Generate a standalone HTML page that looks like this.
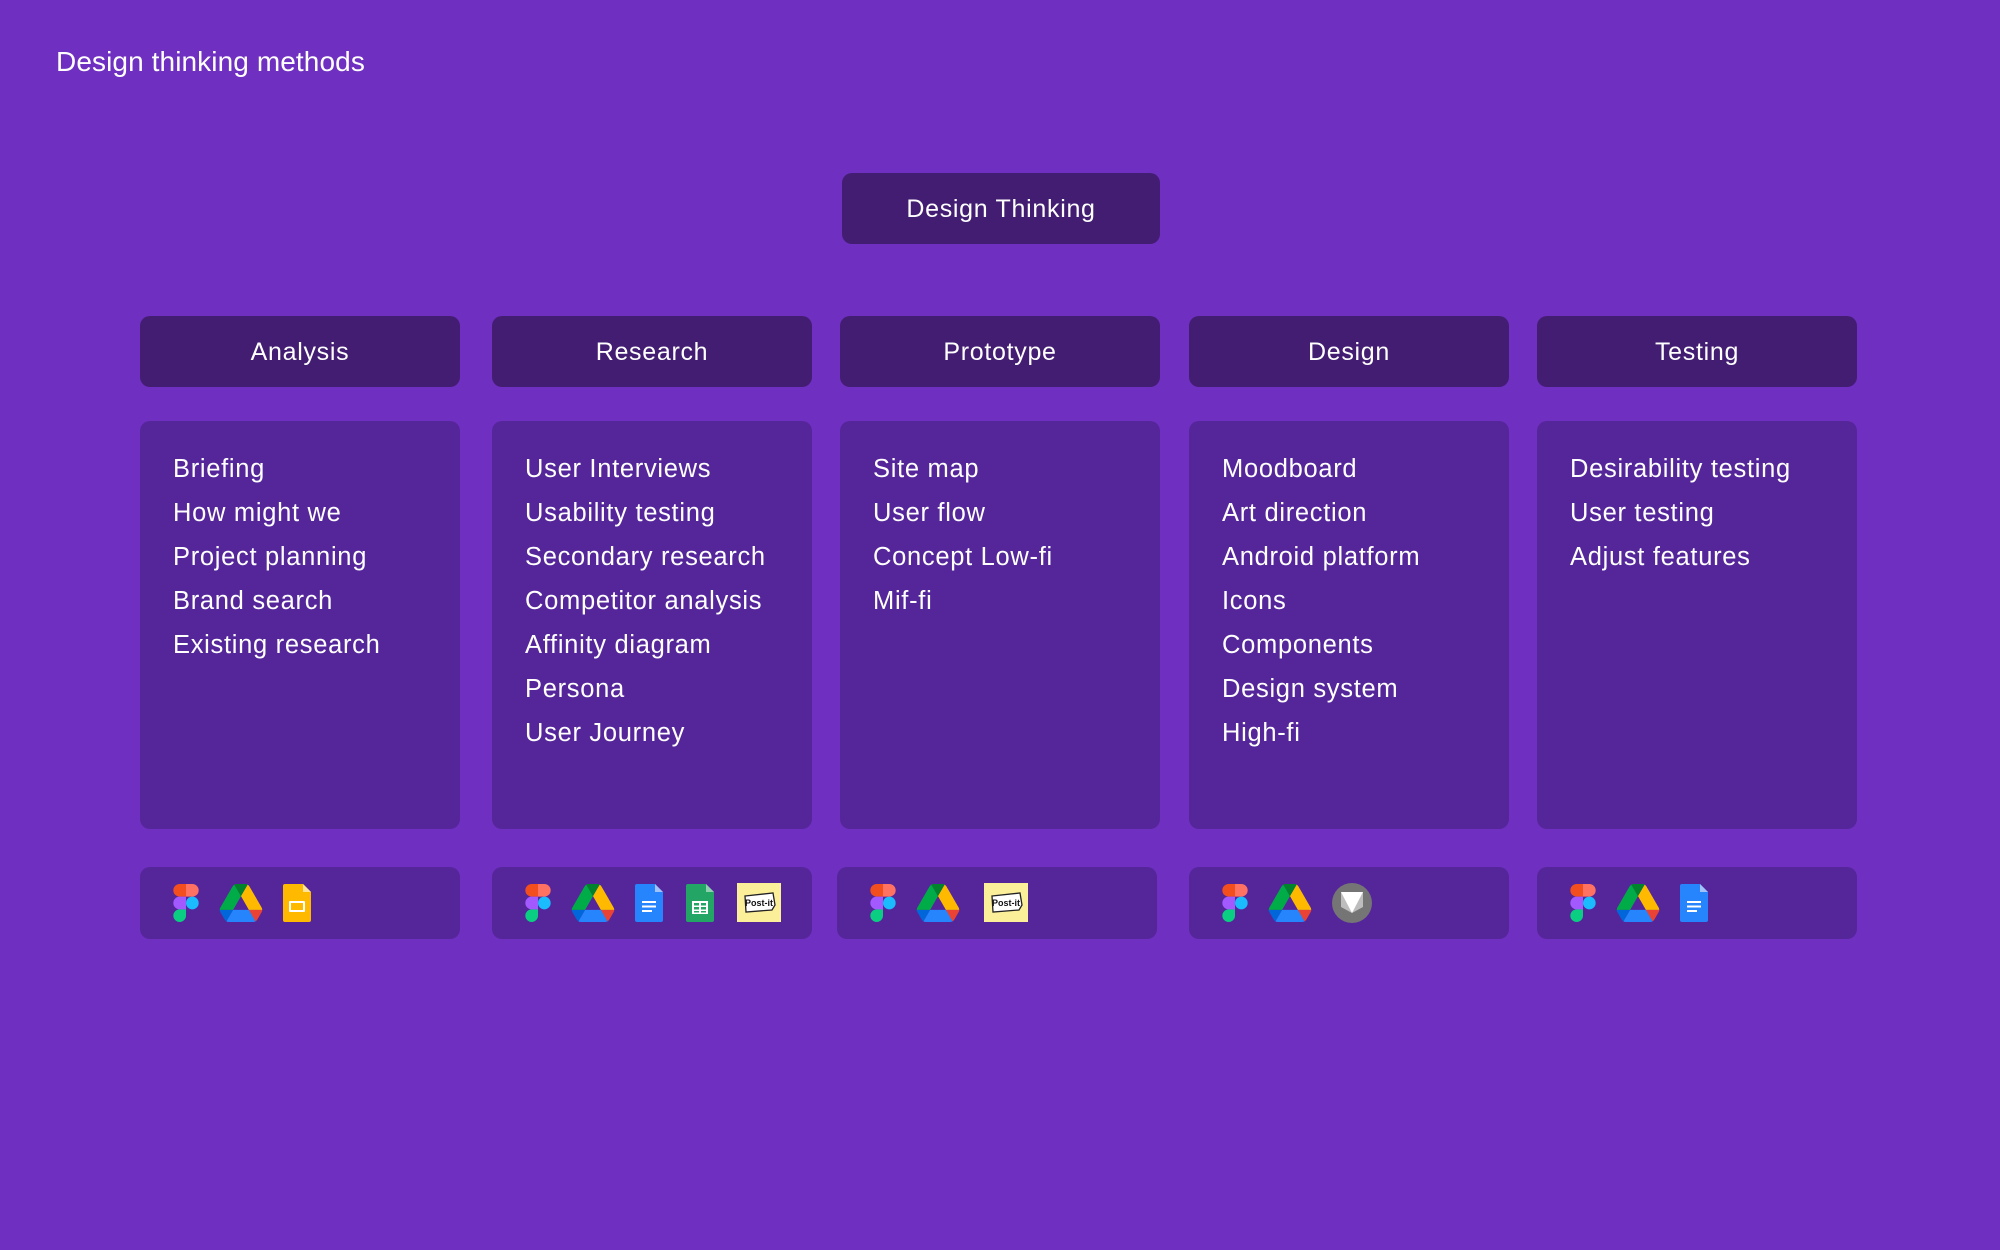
<!DOCTYPE html>
<html><head><meta charset="utf-8"><style>
body{margin:0;width:2000px;height:1250px;background:#6f2fc0;font-family:"Liberation Sans",sans-serif;color:#fff;position:relative;overflow:hidden}
.a{position:absolute}
.title{left:56px;top:46px;font-size:28px;letter-spacing:.1px}
.hd{background:#431d72;border-radius:10px;display:flex;align-items:center;justify-content:center;font-size:25px;letter-spacing:.7px;padding-top:2px;box-sizing:border-box}
.bx{background:#55269a;border-radius:10px}
.list{padding:26px 0 0 33px;font-size:25.5px;letter-spacing:.7px;line-height:44px}
.ic{display:flex;align-items:center;padding-left:33px;box-sizing:border-box}
.ic svg{margin-right:20px;flex:none}
</style></head><body>
<svg width="0" height="0" style="position:absolute">
<defs>
<symbol id="fig" viewBox="0 0 38 57"><path d="M19 28.5a9.5 9.5 0 1 1 19 0 9.5 9.5 0 0 1-19 0z" fill="#1abcfe"/><path d="M0 47.5A9.5 9.5 0 0 1 9.5 38H19v9.5a9.5 9.5 0 1 1-19 0z" fill="#0acf83"/><path d="M19 0v19h9.5a9.5 9.5 0 1 0 0-19z" fill="#ff7262"/><path d="M0 9.5A9.5 9.5 0 0 0 9.5 19H19V0H9.5A9.5 9.5 0 0 0 0 9.5z" fill="#f24e1e"/><path d="M0 28.5A9.5 9.5 0 0 0 9.5 38H19V19H9.5A9.5 9.5 0 0 0 0 28.5z" fill="#a259ff"/></symbol>
<symbol id="drv" viewBox="0 0 87.3 78"><path d="m6.6 66.85 3.85 6.65c.8 1.4 1.95 2.5 3.3 3.3l13.75-23.8h-27.5c0 1.55.4 3.1 1.2 4.5z" fill="#0066da"/><path d="m43.65 25-13.75-23.8c-1.35.8-2.5 1.9-3.3 3.3l-25.4 44a9.06 9.06 0 0 0 -1.2 4.5h27.5z" fill="#00ac47"/><path d="m73.55 76.8c1.35-.8 2.5-1.9 3.3-3.3l1.6-2.75 7.65-13.250c.8-1.4 1.2-2.95 1.2-4.5h-27.502l5.852 11.5z" fill="#ea4335"/><path d="m43.65 25 13.75-23.8c-1.35-.8-2.9-1.200-4.5-1.2h-18.5c-1.6 0-3.15.45-4.5 1.2z" fill="#00832d"/><path d="m59.8 53h-32.3l-13.75 23.8c1.350.8 2.9 1.2 4.5 1.2h50.8c1.6 0 3.150-.45 4.5-1.2z" fill="#2684fc"/><path d="m73.4 26.5-12.7-22c-.8-1.4-1.95-2.5-3.3-3.3l-13.75 23.8 16.150 28h27.45c0-1.55-.4-3.1-1.2-4.5z" fill="#ffba00"/></symbol>
<symbol id="sld" viewBox="0 0 28 38"><path d="M2 0h18l8 8v28a2 2 0 0 1-2 2H2a2 2 0 0 1-2-2V2a2 2 0 0 1 2-2z" fill="#ffba00"/><path d="M20 0l8 8h-8z" fill="#fde49a"/><rect x="6" y="17" width="16" height="11" rx="1" fill="#fff"/><rect x="8" y="19" width="12" height="7" fill="#ffba00"/></symbol>
<symbol id="doc" viewBox="0 0 28 38"><path d="M2 0h18l8 8v28a2 2 0 0 1-2 2H2a2 2 0 0 1-2-2V2a2 2 0 0 1 2-2z" fill="#2684fc"/><path d="M20 0l8 8h-8z" fill="#a1c2fa"/><rect x="7" y="17" width="14" height="2" fill="#fff"/><rect x="7" y="21.5" width="14" height="2" fill="#fff"/><rect x="7" y="26" width="10" height="2" fill="#fff"/></symbol>
<symbol id="sht" viewBox="0 0 28 38"><path d="M2 0h18l8 8v28a2 2 0 0 1-2 2H2a2 2 0 0 1-2-2V2a2 2 0 0 1 2-2z" fill="#23a566"/><path d="M20 0l8 8h-8z" fill="#8ed1b1"/><rect x="6" y="17" width="16" height="13" fill="#fff"/><g fill="#23a566"><rect x="8" y="19" width="5" height="2.5"/><rect x="15" y="19" width="5" height="2.5"/><rect x="8" y="23" width="5" height="2.5"/><rect x="15" y="23" width="5" height="2.5"/><rect x="8" y="27" width="5" height="1.5"/><rect x="15" y="27" width="5" height="1.5"/></g></symbol>
<symbol id="pst" viewBox="0 0 44 40"><rect x="0" y="0" width="44" height="39" fill="#fbef9a"/><path d="M8 13l28-3 2 12-3 5-26 2z" fill="#fff" stroke="#222" stroke-width="1.3"/><text x="22" y="23" font-size="9" font-weight="bold" text-anchor="middle" fill="#111" font-family="Liberation Sans,sans-serif">Post-it</text></symbol>
<symbol id="grv" viewBox="0 0 40 40"><circle cx="20" cy="20" r="20" fill="#757575"/><path d="M9 9h22v15l-11 6-11-6z" fill="#bdbdbd"/><path d="M9 9h22l-11 21z" fill="#fff"/></symbol>
</defs></svg>

<div class="a title">Design thinking methods</div>
<div class="a hd" style="left:842px;top:173px;width:318px;height:71px">Design Thinking</div>

<div class="a hd" style="left:140px;top:316px;width:320px;height:71px">Analysis</div>
<div class="a hd" style="left:492px;top:316px;width:320px;height:71px">Research</div>
<div class="a hd" style="left:840px;top:316px;width:320px;height:71px">Prototype</div>
<div class="a hd" style="left:1189px;top:316px;width:320px;height:71px">Design</div>
<div class="a hd" style="left:1537px;top:316px;width:320px;height:71px">Testing</div>

<div class="a bx list" style="left:140px;top:421px;width:320px;height:408px;box-sizing:border-box">Briefing<br>How might we<br>Project planning<br>Brand search<br>Existing research</div>
<div class="a bx list" style="left:492px;top:421px;width:320px;height:408px;box-sizing:border-box">User Interviews<br>Usability testing<br>Secondary research<br>Competitor analysis<br>Affinity diagram<br>Persona<br>User Journey</div>
<div class="a bx list" style="left:840px;top:421px;width:320px;height:408px;box-sizing:border-box">Site map<br>User flow<br>Concept Low-fi<br>Mif-fi</div>
<div class="a bx list" style="left:1189px;top:421px;width:320px;height:408px;box-sizing:border-box">Moodboard<br>Art direction<br>Android platform<br>Icons<br>Components<br>Design system<br>High-fi</div>
<div class="a bx list" style="left:1537px;top:421px;width:320px;height:408px;box-sizing:border-box">Desirability testing<br>User testing<br>Adjust features</div>

<div class="a bx ic" style="left:140px;top:867px;width:320px;height:72px"><svg width="26" height="38"><use href="#fig"/></svg><svg width="44" height="38"><use href="#drv"/></svg><svg width="28" height="38"><use href="#sld"/></svg></div>
<div class="a bx ic" style="left:492px;top:867px;width:320px;height:72px"><svg width="26" height="38"><use href="#fig"/></svg><svg width="44" height="38"><use href="#drv"/></svg><svg width="28" height="38" style="margin-right:22px"><use href="#doc"/></svg><svg width="30" height="38" style="margin-right:22px"><use href="#sht"/></svg><svg width="44" height="40"><use href="#pst"/></svg></div>
<div class="a bx ic" style="left:837px;top:867px;width:320px;height:72px;padding-left:33px"><svg width="26" height="38"><use href="#fig"/></svg><svg width="44" height="38" style="margin-right:24px"><use href="#drv"/></svg><svg width="44" height="40"><use href="#pst"/></svg></div>
<div class="a bx ic" style="left:1189px;top:867px;width:320px;height:72px"><svg width="26" height="38"><use href="#fig"/></svg><svg width="44" height="38"><use href="#drv"/></svg><svg width="40" height="40"><use href="#grv"/></svg></div>
<div class="a bx ic" style="left:1537px;top:867px;width:320px;height:72px"><svg width="26" height="38"><use href="#fig"/></svg><svg width="44" height="38"><use href="#drv"/></svg><svg width="28" height="38"><use href="#doc"/></svg></div>
</body></html>
